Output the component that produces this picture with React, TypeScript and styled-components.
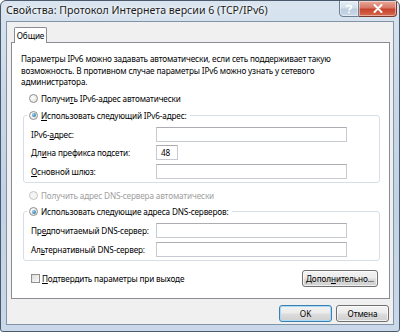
import React from "react";
import styled, { createGlobalStyle } from "styled-components";

const Global = createGlobalStyle`
  html, body { margin: 0; padding: 0; background: #ffffff; }
  body { font-family: "Noto Sans", "Open Sans", sans-serif; }
`;

const Window = styled.div`
  position: relative;
  box-sizing: border-box;
  width: 400px;
  height: 332px;
  border: 1px solid #4a5a6c;
  border-radius: 6px 6px 3px 3px;
  background: linear-gradient(180deg, #d9e4ef 0%, #c8d8e9 30%, #c0d2e4 60%, #cad9e9 100%);
  display: flex;
  flex-direction: column;
  overflow: hidden;
`;

const TitleBar = styled.div`
  height: 19px;
  display: flex;
  align-items: flex-start;
  justify-content: space-between;
  padding-left: 5px;
`;

const Title = styled.div`
  font-size: 10.6px;
  line-height: 19px;
  color: #1b1b1b;
  text-shadow: 0 0 6px #ffffff, 0 0 3px #ffffff;
  white-space: nowrap;
`;

const Caption = styled.div`
  display: flex;
  margin-right: 2px;
`;

const CapButton = styled.div<{ $close?: boolean }>`
  box-sizing: border-box;
  width: ${(p) => (p.$close ? "38px" : "20px")};
  height: 17px;
  margin-top: -1px;
  border: 1px solid ${(p) => (p.$close ? "#7a3a30" : "#6d7f93")};
  border-left: ${(p) => (p.$close ? "none" : "")};
  border-radius: ${(p) => (p.$close ? "0 0 4px 0" : "0 0 0 4px")};
  background: ${(p) =>
    p.$close
      ? "linear-gradient(180deg, #e9a99b 0%, #d87766 45%, #c7432c 55%, #d66a4e 100%)"
      : "linear-gradient(180deg, #e6eef6 0%, #d2dfeb 45%, #bccddf 55%, #cbd9e8 100%)"};
  display: flex;
  align-items: center;
  justify-content: center;
  box-shadow: inset 0 0 0 1px rgba(255, 255, 255, 0.45);
  color: #ffffff;
`;

const Client = styled.div`
  flex: 1;
  margin: 1px 5px 6px 5px;
  border: 1px solid #8393a6;
  background: #f0f0f0;
  display: flex;
  flex-direction: column;
  padding: 5px 3px 0 4px;
`;

const Tabs = styled.div`
  display: flex;
  padding-left: 3px;
  margin-bottom: -1px;
  position: relative;
  z-index: 1;
`;

const Tab = styled.div`
  box-sizing: border-box;
  height: 16px;
  width: 33px;
  border: 1px solid #898c95;
  border-bottom: none;
  border-radius: 2px 2px 0 0;
  background: #ffffff;
  font-size: 8.2px;
  letter-spacing: -0.1px;
  line-height: 15px;
  text-align: center;
  color: #000;
`;

const Panel = styled.div`
  box-sizing: border-box;
  height: 257px;
  border: 1px solid #898c95;
  background: #ffffff;
  padding: 10px 10px 0 9px;
  display: flex;
  flex-direction: column;
  font-size: 8.2px;
  letter-spacing: -0.15px;
  color: #000;
`;

const Description = styled.div`
  line-height: 11.5px;
  height: 35px;
  white-space: nowrap;
`;

const OptionRow = styled.label<{ $disabled?: boolean; $top?: number }>`
  display: flex;
  align-items: center;
  height: 14px;
  margin-left: 8px;
  margin-top: ${(p) => p.$top ?? 0}px;
  color: ${(p) => (p.$disabled ? "#a0a0a0" : "#000")};
  white-space: nowrap;
`;

const Radio = styled.span<{ $checked?: boolean; $disabled?: boolean }>`
  box-sizing: border-box;
  width: 9px;
  height: 9px;
  border-radius: 50%;
  border: 1px solid ${(p) => (p.$disabled ? "#c4c4c4" : "#8e8f8f")};
  background: ${(p) =>
    p.$disabled ? "#f4f4f4" : "radial-gradient(circle at 35% 35%, #ffffff, #dcdcdc)"};
  margin-right: 3px;
  display: flex;
  align-items: center;
  justify-content: center;
  &::after {
    content: "";
    display: ${(p) => (p.$checked ? "block" : "none")};
    width: 4px;
    height: 4px;
    border-radius: 50%;
    background: radial-gradient(circle at 35% 35%, #8fd4f7, #1c5d8b);
  }
`;

const Group = styled.fieldset<{ $top?: number }>`
  margin: ${(p) => p.$top ?? 0}px 0 0 2px;
  width: 357px;
  box-sizing: border-box;
  border: 1px solid #d5dfe5;
  border-radius: 3px;
  padding: 3px 0 1px 7px;
  min-width: 0;
`;

const Legend = styled.legend`
  padding: 0 3px 0 2px;
  margin-left: -4px;
  height: 14px;
`;

const LegendOption = styled.label`
  display: flex;
  align-items: center;
  height: 14px;
  white-space: nowrap;
`;

const FieldRow = styled.div`
  display: flex;
  align-items: center;
  height: 18.5px;
`;

const FieldLabel = styled.span`
  width: 125px;
  white-space: nowrap;
`;

const Input = styled.div<{ $w: number }>`
  box-sizing: border-box;
  width: ${(p) => p.$w}px;
  height: 15px;
  border: 1px solid #c6cbd1;
  border-top-color: #abadb3;
  background: #ffffff;
  line-height: 13px;
  padding-left: 4px;
`;

const BottomRow = styled.div`
  display: flex;
  align-items: center;
  justify-content: space-between;
  margin-top: 9px;
  height: 17px;
  padding-left: 10px;
  padding-right: 1px;
`;

const CheckLabel = styled.label`
  display: flex;
  align-items: center;
  white-space: nowrap;
`;

const Checkbox = styled.span`
  box-sizing: border-box;
  width: 9px;
  height: 9px;
  border: 1px solid #8e8f8f;
  background: linear-gradient(135deg, #dcdcdc, #fbfbfb);
  margin-right: 2px;
`;

const Button = styled.div<{ $w: number; $default?: boolean }>`
  box-sizing: border-box;
  width: ${(p) => p.$w}px;
  height: 17px;
  border: 1px solid ${(p) => (p.$default ? "#3c7fb1" : "#707070")};
  border-radius: 3px;
  background: linear-gradient(180deg, #f3f3f3 0%, #ebebeb 48%, #dddddd 52%, #cfcfcf 100%);
  box-shadow: inset 0 0 0 1px ${(p) => (p.$default ? "#a8dbf5" : "rgba(255,255,255,0.7)")};
  font-size: 8.2px;
  letter-spacing: -0.1px;
  line-height: 15px;
  text-align: center;
  color: #000;
`;

const Footer = styled.div`
  display: flex;
  justify-content: flex-end;
  gap: 4px;
  padding: 6px 1px 0 0;
`;

const U = styled.span`
  text-decoration: underline;
  text-underline-offset: 1px;
`;

export default function App() {
  return (
    <>
      <Global />
      <Window>
        <TitleBar>
          <Title>Свойства: Протокол Интернета версии 6 (TCP/IPv6)</Title>
          <Caption>
            <CapButton>
              <svg width="8" height="10" viewBox="0 0 8 10">
                <path
                  d="M1.5 3 C1.5 1, 6.5 1, 6.5 3 C6.5 4.6, 4 4.6, 4 6.5"
                  fill="none"
                  stroke="#ffffff"
                  strokeWidth="1.6"
                />
                <rect x="3.2" y="7.6" width="1.6" height="1.6" fill="#ffffff" />
              </svg>
            </CapButton>
            <CapButton $close>
              <svg width="10" height="9" viewBox="0 0 10 9">
                <path d="M1.5 1 L8.5 8 M8.5 1 L1.5 8" stroke="#ffffff" strokeWidth="2" strokeLinecap="round" />
              </svg>
            </CapButton>
          </Caption>
        </TitleBar>
        <Client>
          <Tabs>
            <Tab>Общие</Tab>
          </Tabs>
          <Panel>
            <Description>
              Параметры IPv6 можно задавать автоматически, если сеть поддерживает такую
              <br />
              возможность. В противном случае параметры IPv6 можно узнать у сетевого
              <br />
              администратора.
            </Description>
            <OptionRow $top={3}>
              <Radio />
              Получи<U>т</U>ь IPv6-адрес автоматически
            </OptionRow>
            <Group $top={3}>
              <Legend>
                <LegendOption>
                  <Radio $checked />
                  <U>И</U>спользовать следующий IPv6-адрес:
                </LegendOption>
              </Legend>
              <FieldRow>
                <FieldLabel>
                  IPv6-<U>а</U>дрес:
                </FieldLabel>
                <Input $w={191} />
              </FieldRow>
              <FieldRow>
                <FieldLabel>
                  Дл<U>и</U>на префикса подсети:
                </FieldLabel>
                <Input $w={22}>48</Input>
              </FieldRow>
              <FieldRow>
                <FieldLabel>
                  <U>О</U>сновной шлюз:
                </FieldLabel>
                <Input $w={191} />
              </FieldRow>
            </Group>
            <OptionRow $disabled $top={6}>
              <Radio $disabled />
              Получить адрес DNS-сервера автоматически
            </OptionRow>
            <Group $top={2}>
              <Legend>
                <LegendOption>
                  <Radio $checked />
                  Использовать следующие адреса DNS-серверов:
                </LegendOption>
              </Legend>
              <FieldRow>
                <FieldLabel>
                  Пр<U>е</U>дпочитаемый DNS-сервер:
                </FieldLabel>
                <Input $w={191} />
              </FieldRow>
              <FieldRow>
                <FieldLabel>
                  Ал<U>ь</U>тернативный DNS-сервер:
                </FieldLabel>
                <Input $w={191} />
              </FieldRow>
            </Group>
            <BottomRow>
              <CheckLabel>
                <Checkbox />
                <U>П</U>одтвердить параметры при выходе
              </CheckLabel>
              <Button $w={76}>
                Допол<U>н</U>ительно...
              </Button>
            </BottomRow>
          </Panel>
          <Footer>
            <Button $w={53} $default>
              OK
            </Button>
            <Button $w={53}>Отмена</Button>
          </Footer>
        </Client>
      </Window>
    </>
  );
}
